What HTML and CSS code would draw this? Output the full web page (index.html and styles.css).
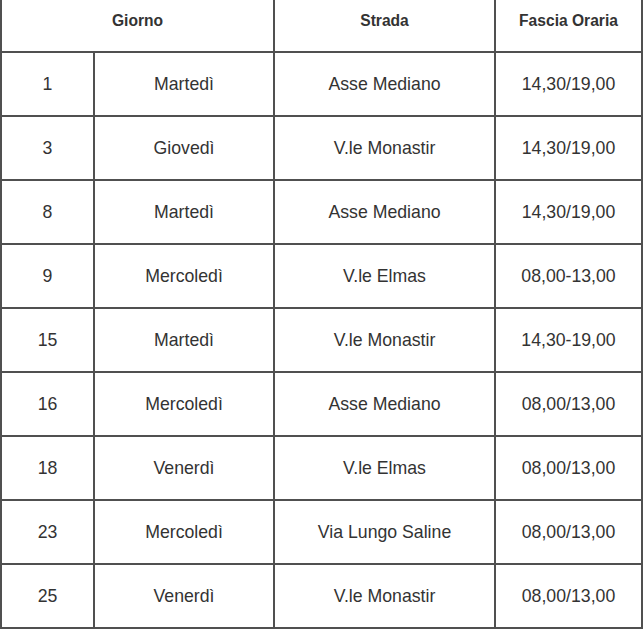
FILE: index.html
```html
<!DOCTYPE html>
<html lang="it">
<head>
<meta charset="utf-8">
<title>Calendario</title>
<link rel="stylesheet" href="styles.css">
</head>
<body>
<table class="schedule">
  <colgroup>
    <col class="c-num">
    <col class="c-day">
    <col class="c-road">
    <col class="c-time">
  </colgroup>
  <thead>
    <tr class="head-row">
      <th colspan="2">Giorno</th>
      <th>Strada</th>
      <th>Fascia Oraria</th>
    </tr>
  </thead>
  <tbody>
    <tr><td>1</td><td>Martedì</td><td>Asse Mediano</td><td>14,30/19,00</td></tr>
    <tr><td>3</td><td>Giovedì</td><td>V.le Monastir</td><td>14,30/19,00</td></tr>
    <tr><td>8</td><td>Martedì</td><td>Asse Mediano</td><td>14,30/19,00</td></tr>
    <tr><td>9</td><td>Mercoledì</td><td>V.le Elmas</td><td>08,00-13,00</td></tr>
    <tr><td>15</td><td>Martedì</td><td>V.le Monastir</td><td>14,30-19,00</td></tr>
    <tr><td>16</td><td>Mercoledì</td><td>Asse Mediano</td><td>08,00/13,00</td></tr>
    <tr><td>18</td><td>Venerdì</td><td>V.le Elmas</td><td>08,00/13,00</td></tr>
    <tr><td>23</td><td>Mercoledì</td><td>Via Lungo Saline</td><td>08,00/13,00</td></tr>
    <tr><td>25</td><td>Venerdì</td><td>V.le Monastir</td><td>08,00/13,00</td></tr>
  </tbody>
</table>
</body>
</html>
```

FILE: styles.css
```css
html, body {
  margin: 0;
  padding: 0;
  background: #ffffff;
}

.schedule {
  border-collapse: separate;
  border-spacing: 0;
  table-layout: fixed;
  width: 643px;
  border-left: 2px solid #505050;
  font-family: "Liberation Sans", Arial, sans-serif;
  color: #333333;
}

.c-num { width: 93px; }
.c-day { width: 180px; }
.c-road { width: 221px; }
.c-time { width: 147px; }

.schedule th,
.schedule td {
  padding: 0;
  border-right: 2px solid #505050;
  border-bottom: 2px solid #505050;
  text-align: center;
}

.head-row {
  height: 53px;
}

.schedule th {
  font-size: 15.6px;
  font-weight: bold;
  vertical-align: top;
  padding-top: 12px;
  color: #333333;
}

.schedule tbody tr {
  height: 64px;
}

.schedule td {
  font-size: 17.7px;
  vertical-align: middle;
}
```
